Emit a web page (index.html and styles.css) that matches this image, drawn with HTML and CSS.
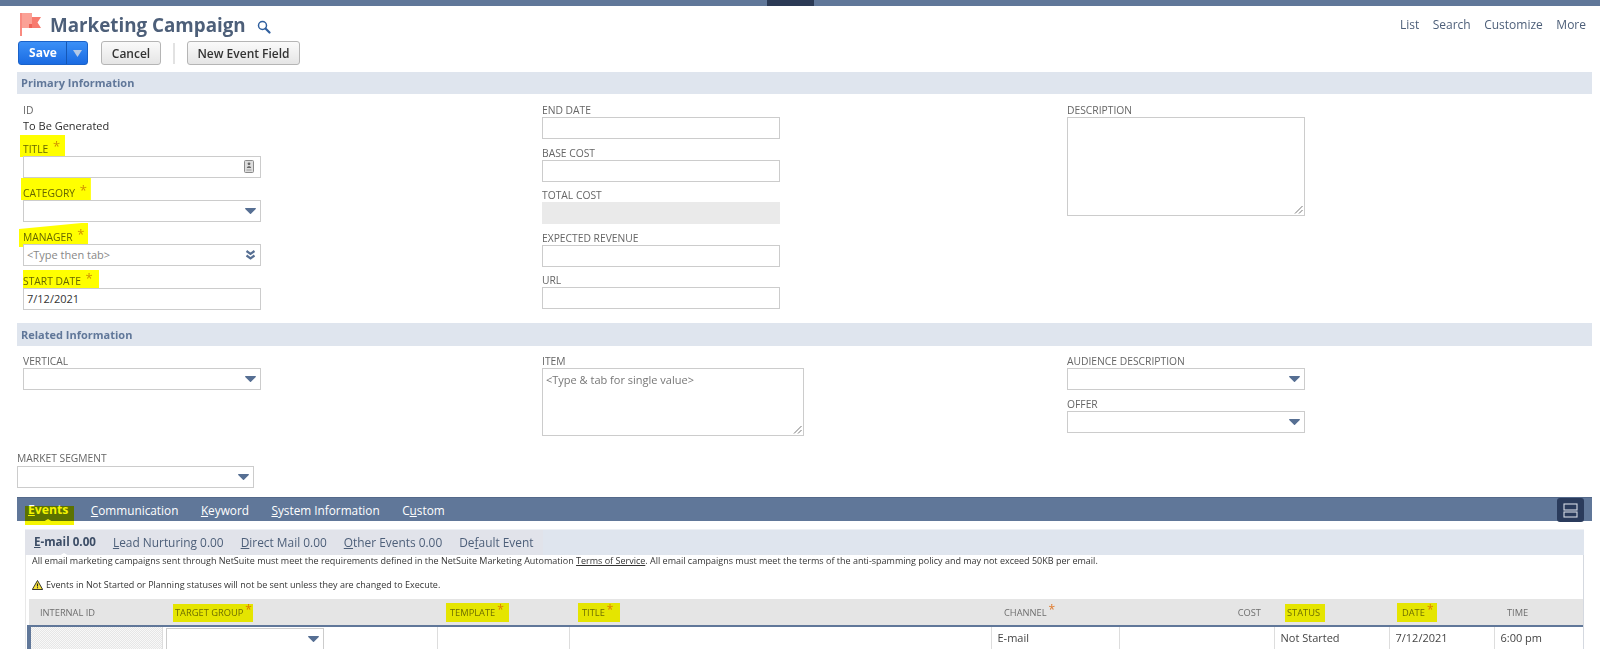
FILE: index.html
```html
<!DOCTYPE html>
<html lang="en">
<head>
<meta charset="utf-8">
<title>Marketing Campaign</title>
<link rel="stylesheet" href="styles.css">
</head>
<body>
<div class="topbar"><div class="topbar-active"></div></div>
<header class="title-row">
  <svg class="flag" width="22" height="24" viewBox="0 0 22 24"><rect x="0" y="0" width="2" height="23" fill="#f98a80"/><path d="M2 0h10v15H2z" fill="#fba196"/><path d="M12 4h9l-3.500 5.500L21 15H12z" fill="#f77b6f"/><path d="M9 11h3v4H9z" fill="#ef6256"/></svg>
  <h1 class="page-title">Marketing Campaign</h1>
  <svg class="title-search" width="14" height="14" viewBox="0 0 14 14"><circle cx="5.500" cy="5.500" r="4" fill="none" stroke="#2f5f9e" stroke-width="1.500"/><path d="M8.500 8.500l4 4" stroke="#2f5f9e" stroke-width="2.200" stroke-linecap="round"/></svg>
  <nav class="top-links"><a>List</a><a>Search</a><a>Customize</a><a>More</a></nav>
</header>
<div class="button-row">
  <div class="btn-save"><span class="btn-save-label">Save</span><span class="btn-save-arrow"><svg width="9" height="7" viewBox="0 0 9 7"><path d="M0 0h9L4.500 7z" fill="#b4c9e6"/></svg></span></div>
  <button class="btn btn-cancel">Cancel</button>
  <span class="btn-sep"></span>
  <button class="btn btn-new">New Event Field</button>
</div>

<h2 class="section">Primary Information</h2>
<div class="columns columns-primary">
  <div class="col">
    <div class="label">ID</div>
    <div class="value">To Be Generated</div>
    <div class="field"><div class="label"><span class="hl hl-a">TITLE <b class="req">*</b></span></div><div class="input"><svg class="contact-icon" width="10" height="13" viewBox="0 0 10 13"><rect x="0.500" y="0.500" width="9" height="12" rx="1" fill="#ddd" stroke="#8a8a8a"/><circle cx="5" cy="3.800" r="1.400" fill="#666"/><path d="M2.800 8c0-2.400 4.400-2.400 4.400 0z" fill="#666"/><path d="M2.500 10h5" stroke="#999"/></svg></div></div>
    <div class="field"><div class="label"><span class="hl hl-b">CATEGORY <b class="req">*</b></span></div><div class="input"><svg class="caret" width="11" height="6" viewBox="0 0 11 6"><path d="M.6 0h9.800c.5 0 .7.500.4.900L6 5.700a.7.700 0 0 1-1 0L.2.900C-.1.500.1 0 .6 0z" fill="#566f93"/></svg></div></div>
    <div class="field"><div class="label"><span class="hl hl-c">MANAGER <b class="req">*</b></span></div><div class="input input-ph">&lt;Type then tab&gt;<svg class="caret" width="11" height="10" viewBox="0 0 11 10"><path d="M1.500 1l4 2.800 4-2.800M1.500 5.500l4 2.800 4-2.800" fill="none" stroke="#566f93" stroke-width="2.200"/></svg></div></div>
    <div class="field"><div class="label"><span class="hl hl-d">START DATE <b class="req">*</b></span></div><div class="input input-val">7/12/2021</div></div>
  </div>
  <div class="col col-tight">
    <div class="tfield"><div class="label">END DATE</div><div class="input"></div></div>
    <div class="tfield"><div class="label">BASE COST</div><div class="input"></div></div>
    <div class="tfield"><div class="label">TOTAL COST</div><div class="input input-off"></div></div>
    <div class="tfield"><div class="label">EXPECTED REVENUE</div><div class="input"></div></div>
    <div class="tfield"><div class="label">URL</div><div class="input"></div></div>
  </div>
  <div class="col">
    <div class="label">DESCRIPTION</div>
    <div class="textarea textarea-desc"><svg class="grip" width="9" height="9" viewBox="0 0 9 9"><path d="M8.500 1L1 8.500M8.500 5L5 8.500" stroke="#777"/></svg></div>
  </div>
</div>

<h2 class="section section-related">Related Information</h2>
<div class="columns columns-related">
  <div class="col">
    <div class="label">VERTICAL</div>
    <div class="input"><svg class="caret" width="11" height="6" viewBox="0 0 11 6"><path d="M.6 0h9.800c.5 0 .7.500.4.900L6 5.700a.7.700 0 0 1-1 0L.2.900C-.1.500.1 0 .6 0z" fill="#566f93"/></svg></div>
  </div>
  <div class="col">
    <div class="label">ITEM</div>
    <div class="textarea textarea-item">&lt;Type &amp; tab for single value&gt;<svg class="grip" width="9" height="9" viewBox="0 0 9 9"><path d="M8.500 1L1 8.500M8.500 5L5 8.500" stroke="#777"/></svg></div>
  </div>
  <div class="col">
    <div class="label">AUDIENCE DESCRIPTION</div>
    <div class="input"><svg class="caret" width="11" height="6" viewBox="0 0 11 6"><path d="M.6 0h9.800c.5 0 .7.500.4.900L6 5.700a.7.700 0 0 1-1 0L.2.900C-.1.500.1 0 .6 0z" fill="#566f93"/></svg></div>
    <div class="label label-offer">OFFER</div>
    <div class="input"><svg class="caret" width="11" height="6" viewBox="0 0 11 6"><path d="M.6 0h9.800c.5 0 .7.500.4.900L6 5.700a.7.700 0 0 1-1 0L.2.900C-.1.500.1 0 .6 0z" fill="#566f93"/></svg></div>
  </div>
</div>
<div class="market">
  <div class="label">MARKET SEGMENT</div>
  <div class="input"><svg class="caret" width="11" height="6" viewBox="0 0 11 6"><path d="M.6 0h9.800c.5 0 .7.500.4.900L6 5.700a.7.700 0 0 1-1 0L.2.900C-.1.500.1 0 .6 0z" fill="#566f93"/></svg></div>
</div>

<div class="tabbar">
  <span class="tab tab-active hl hl-tab"><u>E</u>vents</span>
  <span class="tab"><u>C</u>ommunication</span>
  <span class="tab"><u>K</u>eyword</span>
  <span class="tab"><u>S</u>ystem Information</span>
  <span class="tab">C<u>u</u>stom</span>
  <span class="layout-toggle"><svg width="15" height="15" viewBox="0 0 15 15"><rect x="1" y="1" width="13" height="6" fill="none" stroke="#d5dbe5" stroke-width="1.100"/><rect x="1" y="9" width="13" height="5" fill="none" stroke="#d5dbe5" stroke-width="1.100"/></svg></span>
</div>

<div class="panel">
  <div class="subtabs">
    <div class="subtab-group">
      <span class="subtab subtab-active"><u>E</u>-mail 0.00</span>
      <span class="subtab"><u>L</u>ead Nurturing 0.00</span>
      <span class="subtab"><u>D</u>irect Mail 0.00</span>
      <span class="subtab"><u>O</u>ther Events 0.00</span>
      <span class="subtab">De<u>f</u>ault Event</span>
    </div>
  </div>
  <p class="note">All email marketing campaigns sent through NetSuite must meet the requirements defined in the NetSuite Marketing Automation <u>Terms of Service</u>. All email campaigns must meet the terms of the anti-spamming policy and may not exceed 50KB per email.</p>
  <p class="note note-warn"><svg class="warn" width="11" height="10" viewBox="0 0 11 10"><path d="M5.500.5L10.700 9.500H.3z" fill="#f7e23a" stroke="#222" stroke-width="0.900"/><path d="M5.500 3.500v3M5.500 7.300v1" stroke="#222" stroke-width="1.100"/></svg>Events in Not Started or Planning statuses will not be sent unless they are changed to Execute.</p>
  <table class="grid">
    <colgroup><col class="c1"><col class="c2"><col class="c3"><col class="c4"><col class="c5"><col class="c6"><col class="c7"><col class="c8"><col class="c9"></colgroup>
    <thead><tr>
      <th class="first">INTERNAL ID</th>
      <th><span class="hl hl-e">TARGET GROUP<b class="req-h">*</b></span></th>
      <th><span class="hl hl-f">TEMPLATE<b class="req-h">*</b></span></th>
      <th><span class="hl hl-g">TITLE<b class="req-h">*</b></span></th>
      <th>CHANNEL<b class="req-h">*</b></th>
      <th class="num">COST</th>
      <th><span class="hl hl-h">STATUS</span></th>
      <th><span class="hl hl-i">DATE<b class="req-h">*</b></span></th>
      <th>TIME</th>
    </tr></thead>
    <tbody><tr>
      <td class="cell-id"></td>
      <td class="cell-select"><div class="input input-table"><svg class="caret" width="11" height="6" viewBox="0 0 11 6"><path d="M.6 0h9.800c.5 0 .7.500.4.900L6 5.700a.7.700 0 0 1-1 0L.2.900C-.1.500.1 0 .6 0z" fill="#566f93"/></svg></div></td>
      <td></td>
      <td></td>
      <td>E-mail</td>
      <td></td>
      <td>Not Started</td>
      <td>7/12/2021</td>
      <td>6:00 pm</td>
    </tr></tbody>
  </table>
</div>
</body>
</html>
```

FILE: styles.css
```css
* { box-sizing: border-box; }
html, body { margin: 0; padding: 0; height: 649px; overflow: hidden; background: #fff; }
body { font-family: "Open Sans", "Liberation Sans", sans-serif; font-size: 12px; color: #333; }

.topbar { height: 6px; background: #607799; padding-left: 767px; }
.topbar-active { width: 47px; height: 6px; background: #2b3a55; }

.title-row { display: flex; align-items: flex-start; height: 35px; padding-left: 20px; }
.flag { margin-top: 7px; flex: none; }
.page-title { margin: 5px 0 0 8px; font-size: 18.800px; line-height: 28px; font-weight: 700; color: #4d5f79; }
.title-search { margin: 14px 0 0 11px; }
.top-links { margin-left: auto; display: flex; gap: 13.500px; padding: 9px 14px 0 0; font-size: 12px; line-height: 20px; color: #4d5f79; }

.button-row { display: flex; align-items: center; height: 24px; padding-left: 18px; }
.btn-save { display: flex; width: 70px; height: 24px; border-radius: 3px; overflow: hidden; border: 1px solid #1a62c9; background: linear-gradient(#3c90f7, #1a6be2); color: #fff; font-weight: 700; font-size: 12px; }
.btn-save-label { width: 47px; text-align: center; line-height: 22px; padding-left: 1px; }
.btn-save-arrow { flex: 1; border-left: 1px solid #1557b5; display: flex; align-items: center; justify-content: center; }
.btn { height: 24px; padding: 0; border: 1px solid #b5b5b5; border-radius: 3px; background: linear-gradient(#fafafa, #e5e5e5); font: 600 12px "Open Sans", sans-serif; color: #333; }
.btn-cancel { width: 60px; margin-left: 13px; }
.btn-sep { width: 2px; height: 21px; background: #e2e2e2; margin-left: 12px; }
.btn-new { width: 113px; margin-left: 12px; }

.section { margin: 7px 8px 0 17px; height: 22px; padding-left: 4px; background: #dfe5ee; font-size: 11px; line-height: 21px; font-weight: 700; color: #607799; }
.section-related { margin-top: 14px; height: 23px; line-height: 23px; }

.columns { display: grid; grid-template-columns: 519px 525px 1fr; padding-left: 23px; }
.columns-primary { height: 215px; padding-top: 9px; }
.columns-related { height: 105px; padding-top: 8px; }
.col-tight { padding-top: 0.400px; }

.label { font-size: 10.300px; line-height: 14px; color: #666; }
.value { line-height: 15px; margin-top: 1px; font-size: 11px; color: #2b2b2b; }
.field { height: 44px; padding-top: 8px; }
.value + .field { padding-top: 9px; height: 45px; }
.tfield { height: 42.400px; }
.input { position: relative; width: 238px; height: 22px; border: 1px solid #ccc; background: #fff; font-size: 11px; line-height: 20px; padding-left: 3px; }
.input-ph { color: #888; }
.input-val { color: #333; }
.input-off { background: #eaeaea; border-color: #eaeaea; }
.caret { position: absolute; right: 4px; top: 50%; transform: translateY(-50%); }
.contact-icon { position: absolute; right: 6px; top: 3px; }
.textarea { position: relative; border: 1px solid #ccc; font-size: 11px; line-height: 18px; padding: 2px 3px; color: #777; }
.textarea-desc { width: 238px; height: 99px; }
.textarea-item { width: 262px; height: 68px; }
.grip { position: absolute; right: 1px; bottom: 1px; }
.label-offer { margin-top: 7px; }

.market { padding-left: 17px; height: 46px; }
.market .input { width: 237px; margin-top: 1px; }

.tabbar { display: flex; align-items: center; height: 24px; margin: 0 8px 0 17px; padding-left: 11px; background: #607799; border-top: 1px solid #54698a; color: #fff; font-size: 11.800px; line-height: 22px; position: relative; }
.tab { font-weight: 400; margin-right: 22.500px; }
.tab-active { font-weight: 700; font-size: 12.200px; }
.tab-active::before { content: ""; position: absolute; left: 15px; bottom: -1px; width: 0; height: 0; border: 5px solid transparent; border-bottom: 3px solid #fff; border-top: 0; }
.layout-toggle { position: absolute; right: 8px; top: 0; width: 27px; height: 24px; background: #2a3b5c; border-radius: 3px; display: flex; align-items: center; justify-content: center; }

.panel { margin: 8px 16px 0 25px; height: 122px; border-right: 1px solid #d5d9e0; border-left: 1px solid #e8e8e8; }
.subtabs { height: 26px; background: #dfe5ee; margin: 0 -1px; border-top: 1px solid #eef1f5; }
.subtab-group { display: inline-flex; height: 25px; background: #e1e3ea; padding: 0 9px 0 9px; gap: 17px; font-size: 11.900px; line-height: 24px; color: #4d5f79; }
.subtab { position: relative; }
.subtab-active { font-weight: 700; font-size: 11.600px; color: #3c4d66; }
.subtab-active::after { content: ""; position: absolute; left: 25px; bottom: -1px; width: 0; height: 0; border: 5px solid transparent; border-bottom: 3px solid #fff; border-top: 0; }
.note { margin: 0; padding-left: 6px; font-size: 9px; line-height: 12px; color: #333; }
.note-warn { margin-top: 12px; display: flex; align-items: center; gap: 3px; }

.grid { border-collapse: collapse; table-layout: fixed; width: 1554px; margin: 8px 0 0 1px; }
.c1 { width: 133px; } .c2 { width: 275px; } .c3 { width: 132px; } .c4 { width: 422px; } .c5 { width: 128px; } .c6 { width: 155px; } .c7 { width: 115px; } .c8 { width: 105px; } .c9 { width: 89px; }
.grid th { height: 27px; padding: 0 0 0 13px; background: #e5e5e5; border-bottom: 2px solid #607799; font-size: 9.300px; font-weight: 400; color: #6e6e6e; text-align: left; }
.grid th.first { padding-left: 11px; }
.grid th.num { text-align: right; padding-right: 13px; }
.grid td { height: 23px; padding: 0 0 2px 6px; border-left: 1px solid #ddd; font-size: 11px; color: #444; }
.grid td.cell-id { border-left: 4px solid #607799; background: repeating-conic-gradient(#e6e6e6 0 25%, #f8f8f8 0 50%) 0 0 / 2px 2px; }
.grid td.cell-select { padding: 0 0 0 3px; vertical-align: top; }
.input-table { width: 158px; height: 22px; margin-top: 1px; }

.req { color: #d09000; font-weight: 400; font-size: 13px; margin-left: 2px; vertical-align: 2px; line-height: 0; }
.req-h { color: #e0792a; font-weight: 400; font-size: 12px; margin-left: 2px; vertical-align: 2px; line-height: 0; }

.hl { position: relative; display: inline-block; }
.hl::after { content: ""; position: absolute; background: #ffff00; mix-blend-mode: multiply; pointer-events: none; }
.hl-a::after { left: -3px; right: -5px; top: -7px; bottom: -1px; }
.hl-b::after { left: -2px; right: -4px; top: -8px; bottom: -2px; clip-path: polygon(0 0, 100% 0, 100% 100%, 40% 100%, 0 92%); }
.hl-c::after { left: -4px; right: -4px; top: -7px; bottom: -3px; clip-path: polygon(0 25%, 90% 0, 100% 0, 100% 95%, 0 100%); }
.hl-d::after { left: 0; right: -6px; top: -4px; bottom: -2px; }
.hl-tab::after { left: -3px; right: -6px; top: 7px; bottom: -4px; background: #f5f500; }
.hl-e::after { left: -2px; right: -1px; top: -2px; bottom: -3px; }
.hl-f::after { left: -4px; right: -5px; top: -3px; bottom: -3px; }
.hl-g::after { left: -4px; right: -7px; top: -3px; bottom: -3px; }
.hl-h::after { left: -2px; right: -5px; top: -2px; bottom: -3px; }
.hl-i::after { left: -5px; right: -3px; top: -3px; bottom: -3px; }
```
